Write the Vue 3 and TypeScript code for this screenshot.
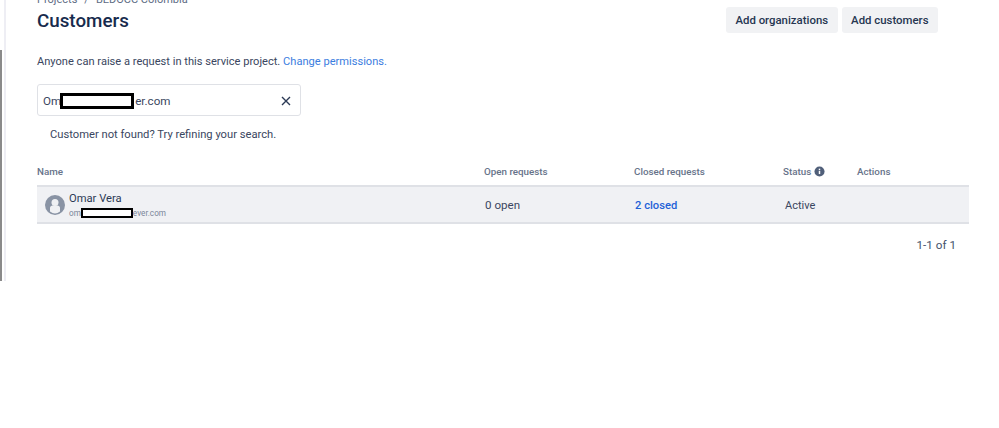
<script setup lang="ts">
const columns = [
  { label: 'Name', cls: 'name' },
  { label: 'Open requests', cls: 'open' },
  { label: 'Closed requests', cls: 'closed' },
  { label: 'Status', cls: 'status' },
  { label: 'Actions', cls: 'actions' },
]
</script>

<template>
  <div class="frame">
    <aside class="rail"></aside>
    <aside class="strip"></aside>
    <main class="page">
      <nav class="crumbs"><span>Projects</span><span class="sep">/</span><span>BEDOCC Colombia</span></nav>
      <header class="head">
        <h1>Customers</h1>
        <div class="buttons">
          <button type="button">Add organizations</button>
          <button type="button">Add customers</button>
        </div>
      </header>
      <p class="intro">Anyone can raise a request in this service project. <a>Change permissions.</a></p>
      <div class="search">
        <span class="value">Om<span class="redact big"></span>er.com</span>
        <svg class="clear" width="10" height="10" viewBox="0 0 10 10"><path d="M1 1l8 8M9 1l-8 8" stroke="#2c3a55" stroke-width="1.4" fill="none"/></svg>
      </div>
      <p class="hint">Customer not found? Try refining your search.</p>
      <div class="table">
        <div class="row heads">
          <div v-for="c in columns" :key="c.label" :class="c.cls">
            {{ c.label }}
            <svg v-if="c.label === 'Status'" class="info" width="11" height="11" viewBox="0 0 12 12"><circle cx="6" cy="6" r="5.5" fill="#505f79"/><rect x="5.2" y="5.2" width="1.6" height="3.6" fill="#fff"/><rect x="5.2" y="2.9" width="1.6" height="1.5" fill="#fff"/></svg>
          </div>
        </div>
        <div class="row body">
          <div class="name person">
            <svg class="avatar" width="20" height="20" viewBox="0 0 20 20">
              <circle cx="10" cy="10" r="10" fill="#8993a4"/>
              <circle cx="10" cy="7.4" r="3.5" fill="#f0f1f4"/>
              <path d="M5 13c0-1.5 1.2-2.4 2.6-2.4h4.8c1.4 0 2.6.9 2.6 2.4v3.6a8 8 0 0 1-10 0z" fill="#f0f1f4"/>
            </svg>
            <div class="who">
              <div class="fullname">Omar Vera</div>
              <div class="mail">om<span class="redact small"></span>ever.com</div>
            </div>
          </div>
          <div class="open">0 open</div>
          <div class="closed link">2 closed</div>
          <div class="status active">Active</div>
          <div class="actions"></div>
        </div>
      </div>
      <div class="pager">1-1 of 1</div>
    </main>
  </div>
</template>

<style>
html, body { margin: 0; background: #fff; }
</style>

<style scoped>
.frame { display: flex; align-items: flex-start; width: 999px; height: 428px; overflow: hidden; font-family: Roboto, "Noto Sans", sans-serif; color: #263651; }
.rail { width: 2px; height: 231px; margin-top: 50px; margin-right: 2px; background: #8a8a8a; flex: none; }
.strip { width: 2px; height: 281px; background: #eeeef4; flex: none; }
.page { flex: none; width: 963px; padding-left: 31px; box-sizing: border-box; }
.crumbs { height: 12px; display: flex; gap: 7px; margin-top: -6px; font-size: 11px; line-height: 12px; color: #5e6c84; }
.head { display: flex; justify-content: space-between; align-items: flex-start; height: 44px; }
h1 { margin: 0; font-size: 18.8px; line-height: 30px; font-weight: 500; color: #172b4d; }
.buttons { display: flex; gap: 4px; margin-right: 31px; margin-top: 1px; }
button { height: 26px; border: 0; border-radius: 3px; background: #f1f2f4; font: 500 11.4px Roboto, sans-serif; color: #263651; padding: 0 9.5px; }
.intro { margin: 4px 0 0; font-size: 11.1px; line-height: 16px; color: #3a4660; }
.intro a { color: #3b7de0; }
.search { margin-top: 14px; width: 264px; height: 32px; box-sizing: border-box; border: 1px solid #dfe1e6; border-radius: 3px; display: flex; align-items: center; justify-content: space-between; padding: 1px 9px 0 5px; font-size: 11.6px; color: #3a4660; }
.value { display: flex; align-items: center; }
.redact { display: inline-block; box-sizing: border-box; background: #fff; border-style: solid; border-color: #000; }
.redact.big { width: 74px; height: 16px; border-width: 3px; margin-left: -1px; margin-right: 1px; }
.redact.small { width: 52px; height: 10px; border-width: 2.5px; }
.hint { margin: 11px 0 0 13px; font-size: 11.2px; line-height: 16px; color: #3a4660; }
.table { margin-top: 16px; width: 932px; }
.row { display: flex; align-items: center; }
.heads { height: 26px; box-sizing: border-box; padding-bottom: 2px; font-size: 9.8px; font-weight: 500; color: #67738a; }
.heads .closed { padding-left: 1px; box-sizing: border-box; }
.body { height: 39px; box-sizing: border-box; background: #f0f1f4; border-top: 2px solid #dfe1e6; border-bottom: 2px solid #dfe1e6; font-size: 11.6px; color: #3a4660; }
.name { width: 447px; flex: none; }
.open { width: 149px; flex: none; }
.closed { width: 149px; flex: none; }
.status { width: 75px; flex: none; display: flex; align-items: center; gap: 3px; box-sizing: border-box; padding-left: 1px; }
.status.active { padding-left: 3px; font-size: 11px; padding-top: 1px; }
.body .open { padding-left: 1px; box-sizing: border-box; }
.actions { flex: 1; }
.person { display: flex; align-items: center; gap: 4px; padding-left: 8px; box-sizing: border-box; }
.who { padding-top: 3px; }
.fullname { font-size: 11.2px; line-height: 14px; color: #2c3a55; margin-top: -1px; }
.mail { font-size: 8.2px; line-height: 13px; color: #7a869a; display: flex; align-items: center; margin-top: 1px; }
.link { color: #1f62d8; font-weight: 500; font-size: 11.2px; padding-left: 2px; padding-top: 1px; box-sizing: border-box; }
.pager { margin-top: 13px; width: 919px; text-align: right; font-size: 11.7px; line-height: 16px; color: #44516a; }
</style>
